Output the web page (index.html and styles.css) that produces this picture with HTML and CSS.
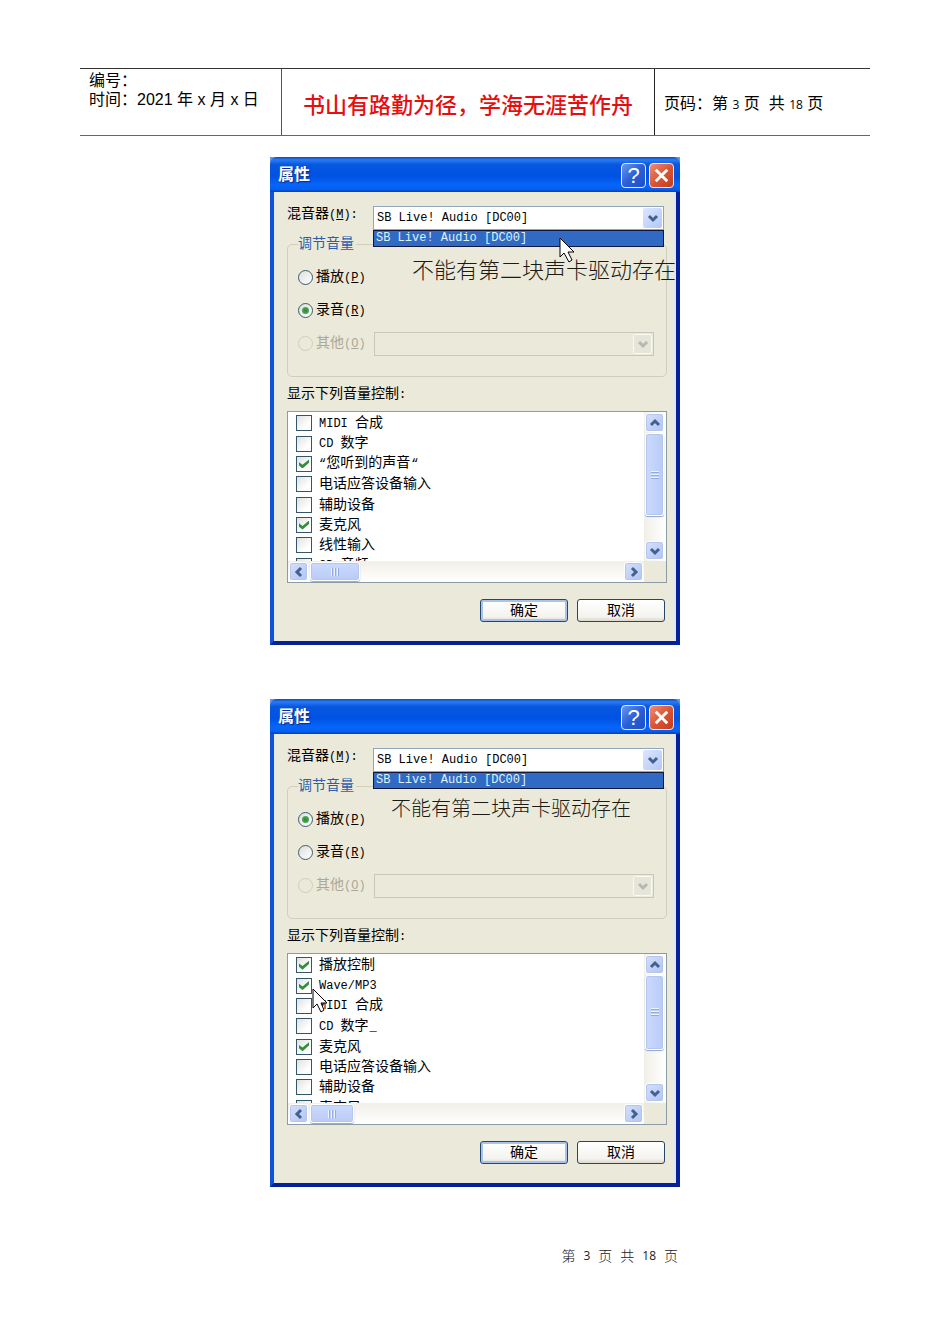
FILE: index.html
```html
<!DOCTYPE html>
<html lang="zh-CN">
<head>
  <meta charset="UTF-8">
  <meta name="viewport" content="width=device-width, initial-scale=1.0">
  <title>声音属性设置</title>
  <link rel="stylesheet" href="styles.css">
</head>
<body>

  <!-- Shared icons -->
  <svg class="icon-defs" aria-hidden="true">
    <symbol id="arrow-down" viewBox="0 0 12 12">
      <path d="M2 4l4 4 4-4" fill="none" stroke="currentColor" stroke-width="3"/>
    </symbol>
    <symbol id="close" viewBox="0 0 24 24">
      <path d="M6 6l12 12M18 6L6 18" fill="none" stroke="#fff" stroke-width="3"/>
    </symbol>
    <symbol id="pointer" viewBox="0 0 16 27">
      <path d="M1 1v19l4-4 5 9 3-2-4-8h6z" fill="#fff" stroke="#000" stroke-width="1"/>
    </symbol>
    <symbol id="pointer-outline" viewBox="0 0 16 27">
      <path d="M1 1v19l4-4 4 8 3-2-3-7h6z" fill="#fff" stroke="#000" stroke-width="1"/>
    </symbol>
  </svg>

  <header class="page-header">
    <div class="header-info">
      <p>编号：</p>
      <p>时间：2021 年 x 月 x 日</p>
    </div>
    <div class="header-motto">书山有路勤为径，学海无涯苦作舟</div>
    <div class="header-pages">页码：第 <span class="num">3</span> 页&nbsp; 共 <span class="num">18</span> 页</div>
  </header>

  <main class="figures">

    <!-- Recording -->
    <section class="dialog">
      <div class="title-bar">
        <h2>属性</h2>
        <button type="button" class="title-button" aria-label="帮助">?</button>
        <button type="button" class="title-button close" aria-label="关闭"><svg><use href="#close"/></svg></button>
      </div>
      <div class="dialog-body">
        <div class="mixer-row">
          <label for="mixer1">混音器<span class="latin">(<u>M</u>):</span></label>
          <div class="combo">
            <select id="mixer1" class="latin"><option>SB Live! Audio [DC00]</option></select>
            <span class="combo-arrow"><svg><use href="#arrow-down"/></svg></span>
            <div class="combo-list latin">SB Live! Audio [DC00]</div>
          </div>
        </div>
        <fieldset class="volume-group">
          <legend>调节音量</legend>
          <div class="radio-row">
            <input type="radio" name="volume1" id="play1">
            <label for="play1">播放<span class="latin">(<u>P</u>)</span></label>
          </div>
          <div class="radio-row">
            <input type="radio" name="volume1" id="record1" checked>
            <label for="record1">录音<span class="latin">(<u>R</u>)</span></label>
          </div>
          <div class="radio-row disabled">
            <input type="radio" name="volume1" id="other1" disabled>
            <label for="other1">其他<span class="latin">(<u>O</u>)</span></label>
            <div class="combo">
              <select aria-label="其他" disabled><option></option></select>
              <span class="combo-arrow"><svg><use href="#arrow-down"/></svg></span>
            </div>
          </div>
        </fieldset>
        <p class="list-title">显示下列音量控制<span class="latin">:</span></p>
        <div class="list-box">
          <div class="list-view">
            <ul class="check-list">
              <li><input type="checkbox" id="a1"><label for="a1"><span class="latin">MIDI </span>合成</label></li>
              <li><input type="checkbox" id="a2"><label for="a2"><span class="latin">CD </span>数字</label></li>
              <li><input type="checkbox" id="a3" checked><label for="a3"><span class="latin">“</span>您听到的声音<span class="latin">“</span></label></li>
              <li><input type="checkbox" id="a4"><label for="a4">电话应答设备输入</label></li>
              <li><input type="checkbox" id="a5"><label for="a5">辅助设备</label></li>
              <li><input type="checkbox" id="a6" checked><label for="a6">麦克风</label></li>
              <li><input type="checkbox" id="a7"><label for="a7">线性输入</label></li>
              <li><input type="checkbox" id="a8"><label for="a8"><span class="latin">CD </span>音频</label></li>
            </ul>
          </div>
          <div class="scrollbar vertical">
            <button type="button" class="scroll-button up" aria-label="向上"><svg><use href="#arrow-down"/></svg></button>
            <div class="track"><div class="thumb" style="height: 78%"></div></div>
            <button type="button" class="scroll-button" aria-label="向下"><svg><use href="#arrow-down"/></svg></button>
          </div>
          <div class="scrollbar horizontal">
            <button type="button" class="scroll-button left" aria-label="向左"><svg><use href="#arrow-down"/></svg></button>
            <div class="track"><div class="thumb" style="width: 16%"></div></div>
            <button type="button" class="scroll-button right" aria-label="向右"><svg><use href="#arrow-down"/></svg></button>
          </div>
        </div>
        <div class="actions">
          <button type="button" class="action default">确定</button>
          <button type="button" class="action">取消</button>
        </div>
      </div>
      <p class="note note-record">不能有第二块声卡驱动存在</p>
      <svg class="pointer pointer-record"><use href="#pointer"/></svg>
    </section>

    <!-- Playback -->
    <section class="dialog">
      <div class="title-bar">
        <h2>属性</h2>
        <button type="button" class="title-button" aria-label="帮助">?</button>
        <button type="button" class="title-button close" aria-label="关闭"><svg><use href="#close"/></svg></button>
      </div>
      <div class="dialog-body">
        <div class="mixer-row">
          <label for="mixer2">混音器<span class="latin">(<u>M</u>):</span></label>
          <div class="combo">
            <select id="mixer2" class="latin"><option>SB Live! Audio [DC00]</option></select>
            <span class="combo-arrow"><svg><use href="#arrow-down"/></svg></span>
            <div class="combo-list latin">SB Live! Audio [DC00]</div>
          </div>
        </div>
        <fieldset class="volume-group">
          <legend>调节音量</legend>
          <div class="radio-row">
            <input type="radio" name="volume2" id="play2" checked>
            <label for="play2">播放<span class="latin">(<u>P</u>)</span></label>
          </div>
          <div class="radio-row">
            <input type="radio" name="volume2" id="record2">
            <label for="record2">录音<span class="latin">(<u>R</u>)</span></label>
          </div>
          <div class="radio-row disabled">
            <input type="radio" name="volume2" id="other2" disabled>
            <label for="other2">其他<span class="latin">(<u>O</u>)</span></label>
            <div class="combo">
              <select aria-label="其他" disabled><option></option></select>
              <span class="combo-arrow"><svg><use href="#arrow-down"/></svg></span>
            </div>
          </div>
        </fieldset>
        <p class="list-title">显示下列音量控制<span class="latin">:</span></p>
        <div class="list-box">
          <div class="list-view">
            <ul class="check-list">
              <li><input type="checkbox" id="b1" checked><label for="b1">播放控制</label></li>
              <li><input type="checkbox" id="b2" checked><label for="b2"><span class="latin">Wave/MP3</span></label></li>
              <li><input type="checkbox" id="b3"><label for="b3"><span class="latin">MIDI </span>合成</label></li>
              <li><input type="checkbox" id="b4"><label for="b4"><span class="latin">CD </span>数字<span class="latin">_</span></label></li>
              <li><input type="checkbox" id="b5" checked><label for="b5">麦克风</label></li>
              <li><input type="checkbox" id="b6"><label for="b6">电话应答设备输入</label></li>
              <li><input type="checkbox" id="b7"><label for="b7">辅助设备</label></li>
              <li><input type="checkbox" id="b8"><label for="b8">麦克风</label></li>
            </ul>
          </div>
          <div class="scrollbar vertical">
            <button type="button" class="scroll-button up" aria-label="向上"><svg><use href="#arrow-down"/></svg></button>
            <div class="track"><div class="thumb" style="height: 70%"></div></div>
            <button type="button" class="scroll-button" aria-label="向下"><svg><use href="#arrow-down"/></svg></button>
          </div>
          <div class="scrollbar horizontal">
            <button type="button" class="scroll-button left" aria-label="向左"><svg><use href="#arrow-down"/></svg></button>
            <div class="track"><div class="thumb" style="width: 14%"></div></div>
            <button type="button" class="scroll-button right" aria-label="向右"><svg><use href="#arrow-down"/></svg></button>
          </div>
        </div>
        <div class="actions">
          <button type="button" class="action default">确定</button>
          <button type="button" class="action">取消</button>
        </div>
      </div>
      <p class="note note-play">不能有第二块声卡驱动存在</p>
      <svg class="pointer pointer-play"><use href="#pointer-outline"/></svg>
    </section>

  </main>

  <footer class="page-footer">
    <span>第</span><span class="num">3</span><span>页</span><span>共</span><span class="num">18</span><span>页</span>
  </footer>

</body>
</html>
```

FILE: styles.css
```css
* {
  box-sizing: border-box;
  margin: 0;
  padding: 0;
}
body {
  padding: 68px 80px;
  background-color: #fff;
  color: #000;
  font-family: "Liberation Sans", "Noto Sans CJK SC", sans-serif;
  font-size: 16px;
}
svg {
  display: block;
}
.icon-defs {
  position: absolute;
  width: 0;
  height: 0;
}

/* Page header */
.page-header {
  display: grid;
  grid-template-columns: 202fr 373fr 215fr;
  min-height: 68px;
  border-top: 1px solid #333;
  border-bottom: 1px solid #666;
}
.header-info {
  padding: 2px 0 0 9px;
  line-height: 19px;
  border-right: 1px solid #555;
}
.header-motto {
  display: flex;
  align-items: center;
  justify-content: center;
  padding-top: 2px;
  color: #e60f0f;
  font-size: 22px;
  font-weight: 500;
  border-right: 1px solid #222;
}
.header-pages {
  padding: 25px 0 0 9px;
  line-height: 20px;
}
.num {
  font-family: "Open Sans", sans-serif;
  font-size: 12px;
}

.figures {
  display: flex;
  flex-direction: column;
  align-items: center;
  gap: 54px;
  margin-top: 21px;
}

/* Dialog */
.dialog {
  position: relative;
  width: 100%;
  max-width: 410px;
  background-color: #6c92e2;
  font-family: "Liberation Mono", "Noto Sans CJK SC", monospace;
  font-size: 14px;
  line-height: 20px;
}
.dialog button,
.dialog select {
  font-family: inherit;
}
.latin,
.dialog select.latin {
  font-family: "Liberation Mono", monospace;
  font-size: 12px;
}
.title-bar {
  display: flex;
  align-items: center;
  gap: 3px;
  height: 35px;
  padding: 2px 6px 0 8px;
  border-radius: 7px 7px 0 0;
  background: linear-gradient(#0a49bd 0, #2a7bf4 8%, #0757df 22%, #0052e2 55%, #0665fb 80%, #0660f0 92%, #0341b8 100%);
}
.title-bar h2 {
  flex: 1;
  color: #fff;
  font-size: 16px;
  font-weight: bold;
  text-shadow: 1px 1px 1px #0a2a80;
}
.title-button {
  display: flex;
  align-items: center;
  justify-content: center;
  width: 25px;
  height: 25px;
  border: 1px solid #e6effa;
  border-radius: 4px;
  background: linear-gradient(135deg, #6b97ee, #2a5fd8 50%, #1b50c6);
  color: #fff;
}
.dialog .title-button {
  font-family: "Liberation Sans", sans-serif;
  font-size: 22px;
  line-height: 22px;
}
.title-button.close {
  background: linear-gradient(135deg, #ec8f78, #dc5533 50%, #c23d1c);
}
.title-button svg {
  width: 23px;
  height: 23px;
  flex: none;
}
.dialog-body {
  padding: 14px 9px 19px 13px;
  border: solid #0831d9;
  border-color: #0a3cc8 #04219a #04219a #1450d4;
  border-width: 0 4px 4px 4px;
  background-color: #ebe9d9;
  box-shadow: inset -2px 0 #dde8f4, inset 1px 0 #dde8f4;
}

/* Combo boxes */
.mixer-row {
  display: flex;
  padding-right: 3px;
}
.mixer-row label {
  flex: none;
  width: 86px;
  line-height: 16px;
}
label > .latin:last-child:not(:first-child) {
  margin-left: 1px;
}
.combo {
  position: relative;
  display: grid;
  grid-template-columns: minmax(0, 1fr);
  flex: 1;
}
.combo select {
  grid-area: 1 / 1;
  width: 100%;
  height: 24px;
  padding: 0 3px;
  appearance: none;
  border: 1px solid #8ea6bb;
  border-radius: 0;
  background-color: #fff;
  color: #000;
}
.combo-arrow {
  grid-area: 1 / 1;
  z-index: 1;
  justify-self: end;
  align-self: center;
  display: flex;
  align-items: center;
  justify-content: center;
  width: 19px;
  height: 20px;
  margin-right: 2px;
  border-radius: 2px;
  background: linear-gradient(135deg, #dce6fe, #b3c7f5);
  color: #44608f;
  pointer-events: none;
}
.combo-arrow svg {
  width: 12px;
  height: 12px;
}
.combo-list {
  position: absolute;
  z-index: 1;
  top: 100%;
  left: 0;
  right: 0;
  padding-left: 2px;
  border: 1px solid #101840;
  background-color: #316ac5;
  color: #dcf2f4;
  line-height: 15px;
}

/* Volume group */
.volume-group {
  margin-top: 4px;
  padding: 7px 12px 16px 10px;
  min-width: 0;
  border: 1px solid #d0cebc;
  border-radius: 5px;
}
.volume-group legend {
  padding-right: 2px;
  color: #2b5faa;
}
.radio-row {
  display: flex;
  align-items: center;
  height: 33px;
}
.radio-row input {
  display: grid;
  place-items: center;
  flex: none;
  width: 15px;
  height: 15px;
  margin-right: 3px;
  appearance: none;
  border: 1px solid #3c5b6c;
  border-radius: 50%;
  background: linear-gradient(135deg, #dcdfdc, #fff);
}
.radio-row input:checked::before {
  content: "";
  width: 7px;
  height: 7px;
  border-radius: 50%;
  background: radial-gradient(#2b8a35, #5db565);
}
.radio-row label {
  flex: none;
  width: 58px;
}
.disabled {
  color: #aaa898;
}
.radio-row.disabled input {
  border-color: #cfcdbc;
  background: none;
}
.disabled .combo select {
  border-color: #c9c7b8;
  background-color: #ebe9d9;
  opacity: 1;
}
.disabled .combo-arrow {
  border: 1px solid #faf9f2;
  background: #e6e5da;
  color: #b9b8ac;
}

/* List of volume controls */
.list-title {
  margin: 7px 0 6px;
}
.list-box {
  display: grid;
  grid-template: 149px 21px / 1fr 22px;
  border: 1px solid #8c9ca6;
  background-color: #ebe9d9;
}
.list-view {
  overflow: hidden;
  background-color: #fff;
}
.check-list {
  display: grid;
  grid-auto-rows: 1fr;
  height: 165px;
  padding: 1px 8px;
  list-style: none;
}
.check-list li {
  display: flex;
  align-items: center;
  gap: 7px;
  min-height: 0;
}
.check-list input {
  display: grid;
  place-items: center;
  width: 16px;
  height: 16px;
  appearance: none;
  border: 1px solid #34566b;
  background: linear-gradient(135deg, #dfe1df, #fff 70%);
}
.check-list input:checked::before {
  content: "";
  width: 10px;
  height: 9px;
  background-color: #2f8f3a;
  clip-path: polygon(0 30%, 35% 60%, 100% 0, 100% 38%, 35% 100%, 0 68%);
}

/* Scrollbars */
.scrollbar {
  display: flex;
  padding: 1px;
  background-color: #f5f5f0;
}
.vertical {
  flex-direction: column;
  padding-right: 2px;
  background: linear-gradient(90deg, #f0efe8, #fff);
}
.horizontal {
  background: linear-gradient(#f0efe8, #fff);
}
.scroll-button {
  display: flex;
  align-items: center;
  justify-content: center;
  flex: none;
  width: 19px;
  height: 19px;
  border: 1px solid #fff;
  border-radius: 3px;
  background: linear-gradient(135deg, #d4e0fd, #b0c5f4);
  box-shadow: inset 0 0 0 1px #b4c6ee;
  color: #44608f;
}
.scroll-button svg {
  width: 12px;
  height: 12px;
}
.up svg {
  transform: rotate(180deg);
}
.left svg {
  transform: rotate(90deg);
}
.right svg {
  transform: rotate(-90deg);
}
.track {
  flex: 1;
  padding: 1px 0;
}
.horizontal .track {
  padding: 0 2px;
}
.thumb {
  display: grid;
  place-items: center;
  height: 100%;
  border: 1px solid #fff;
  border-radius: 3px;
  background: linear-gradient(90deg, #cbdafe, #b9cbf6);
  box-shadow: inset 0 0 0 1px #b4c6ee, 0 1px 1px #8fa6cf;
}
.thumb::before {
  content: "";
  width: 8px;
  height: 8px;
  background: repeating-linear-gradient(#eef4fe 0 1px, #8fabdf 1px 2px, #c1d2fa 2px 3px);
}
.horizontal .thumb {
  background: linear-gradient(#cbdafe, #b9cbf6);
}
.horizontal .thumb::before {
  background: repeating-linear-gradient(90deg, #eef4fe 0 1px, #8fabdf 1px 2px, #c1d2fa 2px 3px);
}

/* Dialog buttons */
.actions {
  display: flex;
  justify-content: flex-end;
  gap: 9px;
  margin-top: 16px;
  padding-right: 2px;
}
.action {
  width: 88px;
  height: 23px;
  border: 1px solid #24486a;
  border-radius: 3px;
  background: linear-gradient(#fff, #f4f3ee 80%, #dbd8cc);
  color: #000;
  font-size: 14px;
  line-height: 20px;
}
.action.default {
  box-shadow: inset 0 0 0 2px #a9c3ee;
}

/* Annotations over the dialogs */
.note {
  position: absolute;
  z-index: 2;
  color: #1c1a15;
  font-weight: 300;
  line-height: 30px;
  white-space: nowrap;
}
.note-record {
  top: 101px;
  left: 142px;
  font-size: 22px;
}
.note-play {
  top: 97px;
  left: 121px;
  font-size: 20px;
}
.pointer {
  position: absolute;
  z-index: 3;
  width: 16px;
  height: 27px;
}
.pointer-record {
  top: 80px;
  left: 289px;
}
.pointer-play {
  top: 289px;
  left: 42px;
}

/* Page footer */
.page-footer {
  display: flex;
  justify-content: flex-end;
  align-items: center;
  gap: 8px;
  max-width: 410px;
  margin: 59px auto 0;
  padding-right: 2px;
  color: #222;
  font-size: 14px;
  font-weight: 300;
  line-height: 20px;
}
.page-footer .num {
  font-weight: 500;
}
```
